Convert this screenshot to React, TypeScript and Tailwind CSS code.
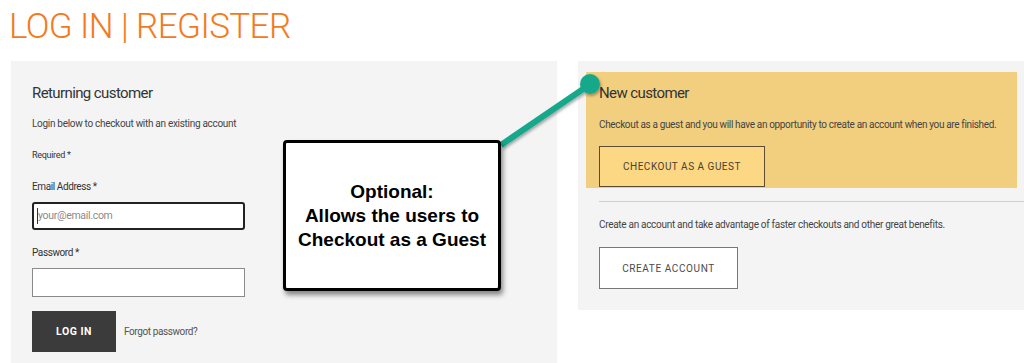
import React from "react";

const font = "font-['Roboto','Liberation_Sans',sans-serif]";

const Callout = () => (
  <div className="absolute left-[283px] top-[140px] w-[218px] h-[151px] flex items-center justify-center rounded-[4px] border-[3px] border-black bg-white shadow-[2px_4px_5px_rgba(0,0,0,0.45)]">
    <p className="text-center font-['Liberation_Sans',Arial,sans-serif] text-[19px] font-bold leading-[24px] tracking-normal text-black">
      Optional:
      <br />
      Allows the users to
      <br />
      Checkout as a Guest
    </p>
  </div>
);

const Connector = () => (
  <svg className="absolute left-0 top-0 pointer-events-none" width="1024" height="363">
    <defs>
      <filter id="sh" x="-20%" y="-20%" width="140%" height="140%">
        <feDropShadow dx="1" dy="2" stdDeviation="1.5" floodColor="#000" floodOpacity="0.35" />
      </filter>
    </defs>
    <g filter="url(#sh)">
      <line x1="501" y1="145" x2="589" y2="85" stroke="#16a88b" strokeWidth="6" />
      <circle cx="590" cy="84" r="10" fill="#16a88b" />
    </g>
  </svg>
);

export default function App() {
  return (
    <div className={`relative h-[363px] w-[1024px] overflow-hidden bg-white text-[#3a3a3a] ${font}`}>
      <h1 className="pl-[9px] pt-[7px] h-[61px] text-[35px] font-light leading-[40px] tracking-[-0.6px] text-[#f47a20]">
        LOG IN | REGISTER
      </h1>

      <div className="flex items-start gap-[21px] pl-[11px]">
        {/* returning customer */}
        <div className="w-[546px] shrink-0 h-[320px] bg-[#f4f4f4] px-[21px] pt-[22px]">
          <h2 className="text-[15px] leading-[20px] tracking-[-0.6px] text-[#333]">Returning customer</h2>
          <p className="mt-[14px] text-[10px] leading-[14px] tracking-[-0.3px] text-[#444]">
            Login below to checkout with an existing account
          </p>
          <p className="mt-[17px] text-[9px] leading-[14px] tracking-[-0.3px] text-[#333]">Required *</p>
          <label className="mt-[18px] block text-[10px] leading-[14px] tracking-[-0.4px] text-[#333]">Email Address *</label>
          <div className="mt-[8px] flex h-[28px] w-[213px] items-center rounded-[3px] border-2 border-[#222] bg-white px-[3px] text-[10.5px] tracking-[-0.3px] text-[#8a8a8a]">
            <span className="border-l border-[#333]">your@email.com</span>
          </div>
          <label className="mt-[16px] block text-[10px] leading-[14px] tracking-[-0.4px] text-[#333]">Password *</label>
          <div className="mt-[8px] h-[29px] w-[213px] border border-[#8a8a8a] bg-white" />
          <div className="mt-[14px] flex items-center gap-[8px]">
            <button className="h-[41px] w-[84px] bg-[#3b3b3b] text-[10.5px] font-bold tracking-[0.5px] text-white">
              LOG IN
            </button>
            <span className="text-[10px] tracking-[-0.4px] text-[#555]">Forgot password?</span>
          </div>
        </div>

        {/* new customer */}
        <div className="flex-1 h-[249px] bg-[#f4f4f4] pt-[11px]">
          <div className="ml-[8px] mr-[7px] h-[116px] bg-[#f2cf7f] px-[13px] pt-[11px]">
            <h2 className="text-[15px] leading-[20px] tracking-[-0.6px] text-[#333]">New customer</h2>
            <p className="mt-[15px] whitespace-nowrap text-[10px] leading-[14px] tracking-[-0.35px] text-[#444]">
              Checkout as a guest and you will have an opportunity to create an account when you are finished.
            </p>
            <button className="mt-[14px] h-[41px] w-[166px] border border-[#5c4c30] bg-[#fcd784] text-[10px] tracking-[0.5px] text-[#4a4030]">
              CHECKOUT AS A GUEST
            </button>
          </div>
          <div className="ml-[21px] mt-[13px] border-t border-[#cfcfcf]" />
          <p className="ml-[21px] mt-[16px] text-[10px] leading-[14px] tracking-[-0.3px] text-[#444]">
            Create an account and take advantage of faster checkouts and other great benefits.
          </p>
          <button className="ml-[21px] mt-[15px] h-[42px] w-[139px] border border-[#777] bg-white text-[10px] tracking-[0.6px] text-[#4a4a4a]">
            CREATE ACCOUNT
          </button>
        </div>
      </div>

      <Connector />
      <Callout />
    </div>
  );
}
